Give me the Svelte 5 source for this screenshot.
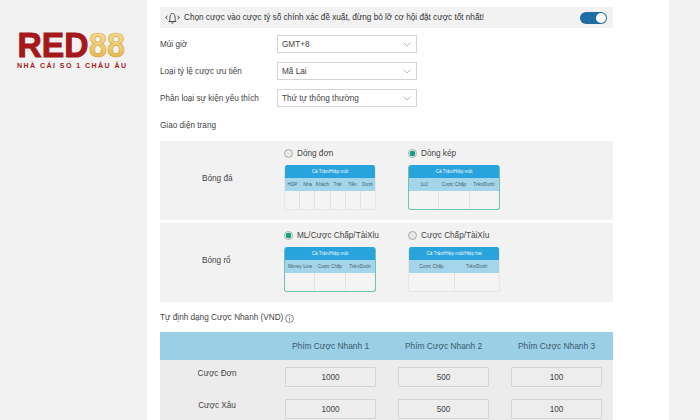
<script>
  const selects = [
    { label: 'Múi giờ', value: 'GMT+8' },
    { label: 'Loại tỷ lệ cược ưu tiên', value: 'Mã Lai' },
    { label: 'Phân loại sự kiện yêu thích', value: 'Thứ tự thông thường' }
  ];
  const layouts = [
    {
      sport: 'Bóng đá',
      options: [
        { name: 'Dòng đơn', on: false, title: 'Cả Trận/Hiệp một', cols: ['HDP', 'Nhà', 'Khách', 'Trải', 'Tiền', 'Dưới'] },
        { name: 'Dòng kép', on: true, title: 'Cả Trận/Hiệp một', cols: ['1x2', 'Cược Chấp', 'Trên/Dưới'] }
      ]
    },
    {
      sport: 'Bóng rổ',
      options: [
        { name: 'ML/Cược Chấp/TàiXỉu', on: true, title: 'Cả Trận/Hiệp một', cols: ['Money Line', 'Cược Chấp', 'Trên/Dưới'] },
        { name: 'Cược Chấp/TàiXỉu', on: false, title: 'Cả Trận/Hiệp một/Hiệp hai', cols: ['Cược Chấp', 'Trên/Dưới'] }
      ]
    }
  ];
  const quick = [
    { label: 'Cược Đơn', vals: [1000, 500, 100] },
    { label: 'Cược Xâu', vals: [1000, 500, 100] }
  ];
</script>

<div class="page">
  <aside class="side">
    <svg class="logo" width="112" height="56" viewBox="0 0 112 56">
      <defs>
        <linearGradient id="gold" x1="0" y1="0" x2="0" y2="1">
          <stop offset="0" stop-color="#f6e09a" />
          <stop offset="0.55" stop-color="#f0cf74" />
          <stop offset="1" stop-color="#d9a63e" />
        </linearGradient>
      </defs>
      <text class="word" x="0.5" y="39" textLength="71" lengthAdjust="spacingAndGlyphs" fill="#a5191b" stroke="#a5191b" stroke-width="1">RED</text>
      <text class="word" x="72" y="39" textLength="36" lengthAdjust="spacingAndGlyphs" fill="url(#gold)" stroke="#d8a640" stroke-width="0.7">88</text>
      <text class="slogan" x="0" y="50" textLength="109" fill="#a5191b">NHÀ CÁI SỐ 1 CHÂU ÂU</text>
    </svg>
  </aside>

  <main class="panel">
    <div class="notice">
      <svg class="bell" width="17" height="14" viewBox="0 0 17 14" fill="none" stroke="#333" stroke-width="0.9">
        <path d="M5 10.500c1-1 .8-2.500 1-4.500.2-2 1-3.500 2.500-3.500S10.800 4 11 6c.2 2 0 3.500 1 4.500z" />
        <path d="M7.500 12h2" />
        <path d="M3.500 5 1.500 6.500 3.500 8M13.500 5l2 1.500-2 1.500" />
      </svg>
      <span class="notice-text">Chọn cược vào cược tỷ số chính xác đề xuất, đừng bỏ lỡ cơ hội đặt cược tốt nhất!</span>
      <span class="toggle"><span class="knob"></span></span>
    </div>

    <div class="fields">
      {#each selects as s}
        <div class="field">
          <span class="field-label">{s.label}</span>
          <div class="select">
            <span>{s.value}</span>
            <svg width="8" height="5" viewBox="0 0 8 5" fill="none" stroke="#a9a9a9" stroke-width="0.8"><path d="M.5.500 4 4 7.500.5" /></svg>
          </div>
        </div>
      {/each}
    </div>

    <div class="heading">Giao diện trang</div>

    <div class="sports">
      {#each layouts as l}
        <section class="sport">
          <div class="sport-name">{l.sport}</div>
          {#each l.options as o}
            <div class="option">
              <div class="radio-row">
                <span class="radio" class:on={o.on}></span>
                <span>{o.name}</span>
              </div>
              <div class="mini" class:on={o.on}>
                <div class="mini-title">{o.title}</div>
                <div class="mini-cols">
                  {#each o.cols as c}<span>{c}</span>{/each}
                </div>
                <div class="mini-cells">
                  {#each o.cols as c}<span></span>{/each}
                </div>
              </div>
            </div>
          {/each}
        </section>
      {/each}
    </div>

    <div class="heading quick-heading">
      Tự định dạng Cược Nhanh (VND)
      <svg width="9" height="9" viewBox="0 0 9 9" fill="none" stroke="#555" stroke-width="0.7">
        <circle cx="4.500" cy="4.500" r="3.900" />
        <path d="M4.500 4v2.800M4.500 2.200v.9" />
      </svg>
    </div>

    <div class="quick">
      <div class="quick-row head">
        <span></span>
        <span>Phím Cược Nhanh 1</span>
        <span>Phím Cược Nhanh 2</span>
        <span>Phím Cược Nhanh 3</span>
      </div>
      <div class="quick-body">
        {#each quick as q}
          <div class="quick-row">
            <span class="quick-label">{q.label}</span>
            {#each q.vals as v}<span class="box">{v}</span>{/each}
          </div>
        {/each}
      </div>
    </div>
  </main>

  <div class="right"></div>
</div>

<style>
  :global(body) {
    margin: 0;
    background: #f2f2f2;
  }
  * {
    box-sizing: border-box;
  }
  .page {
    display: flex;
    width: 700px;
    height: 420px;
    overflow: hidden;
    font-family: "Liberation Sans", Arial, sans-serif;
    font-size: 8.200px;
    color: #444;
  }
  .side {
    width: 147px;
    flex: none;
    padding: 18px 0 0 17px;
  }
  .logo {
    display: block;
  }
  .word {
    font-weight: 700;
    font-size: 35px;
  }
  .slogan {
    font-size: 7px;
    font-weight: 700;
  }
  .panel {
    width: 522px;
    flex: none;
    background: #fff;
    padding: 7px 56px 0 13px;
    height: 420px;
  }
  .notice {
    display: flex;
    align-items: center;
    height: 21px;
    background: #f2f2f2;
    padding: 0 6px 0 4px;
    margin-bottom: 7px;
  }
  .bell {
    flex: none;
    margin-right: 3px;
  }
  .notice-text {
    flex: 1;
    white-space: nowrap;
    color: #333;
  }
  .toggle {
    display: flex;
    align-items: center;
    justify-content: flex-end;
    width: 27px;
    height: 12px;
    border-radius: 6px;
    background: #1f6ea3;
    padding-right: 1px;
  }
  .knob {
    width: 10px;
    height: 10px;
    border-radius: 50%;
    background: #fff;
  }
  .fields {
    display: flex;
    flex-direction: column;
    gap: 9px;
  }
  .field {
    display: flex;
    align-items: center;
  }
  .field-label {
    width: 117px;
    flex: none;
    white-space: nowrap;
  }
  .select {
    display: flex;
    align-items: center;
    justify-content: space-between;
    width: 140px;
    height: 18px;
    padding: 0 5px 0 4px;
    border: 1px solid #d4d4d4;
    background: #fff;
    color: #444;
  }
  .heading {
    margin-top: 14px;
    height: 10px;
    line-height: 10px;
    white-space: nowrap;
  }
  .sports {
    display: flex;
    flex-direction: column;
    gap: 3px;
    margin-top: 10px;
  }
  .sport {
    display: flex;
    height: 79px;
    background: #f2f2f2;
    padding-top: 6px;
  }
  .sport-name {
    width: 124px;
    flex: none;
    align-self: center;
    margin-top: -10px;
    padding-left: 42px;
  }
  .option {
    width: 124px;
    flex: none;
  }
  .radio-row {
    display: flex;
    align-items: center;
    gap: 4px;
    height: 12px;
  }
  .radio {
    width: 9px;
    height: 9px;
    border-radius: 50%;
    border: 1px solid #aaa;
    background: #e8e8e8;
    flex: none;
  }
  .radio.on {
    border-color: #8fb5ac;
    background: radial-gradient(circle, #1e9c80 0 2.600px, #fff 3.200px);
  }
  .mini {
    width: 92px;
    height: 45px;
    margin-top: 6px;
    border-radius: 3px;
    border: 1px solid #e6e6e6;
    border-top: 0;
    overflow: hidden;
    font-size: 4.700px;
    background: #f4f4f4;
  }
  .mini.on {
    border-color: #6cc4b3;
  }
  .mini-title {
    height: 13px;
    line-height: 13px;
    text-align: center;
    background: #29a3dc;
    color: #eef8fd;
  }
  .mini-cols {
    display: flex;
    height: 13px;
    background: #a5d5ea;
    color: #44606c;
  }
  .mini-cols span {
    flex: 1;
    min-width: 0;
    line-height: 13px;
    text-align: center;
    white-space: nowrap;
  }
  .mini-cells {
    display: flex;
    height: 19px;
  }
  .mini-cells span {
    flex: 1;
    border-left: 1px solid #e2e2e2;
  }
  .mini-cells span:first-child {
    border-left: 0;
  }
  .quick-heading {
    margin-top: 11px;
    display: flex;
    align-items: center;
    gap: 2px;
  }
  .quick {
    margin-top: 9px;
  }
  .quick-row {
    display: grid;
    grid-template-columns: 103px 91px 91px 91px;
    column-gap: 22px;
    align-items: center;
    text-align: center;
  }
  .quick-row.head {
    height: 28px;
    background: #9bcfe6;
    font-size: 8.400px;
    color: #39596a;
    white-space: nowrap;
  }
  .quick-row.head span {
    white-space: nowrap;
  }
  .quick-body {
    display: flex;
    flex-direction: column;
    gap: 12px;
    background: #ececec;
    padding-top: 7px;
    height: 60px;
  }
  .quick-label {
    align-self: start;
    line-height: 13px;
    padding-left: 11px;
  }
  .box {
    height: 20px;
    line-height: 20px;
    border: 1px solid #d4d4d4;
    border-radius: 1px;
    background: #ededed;
    color: #444;
  }
</style>
